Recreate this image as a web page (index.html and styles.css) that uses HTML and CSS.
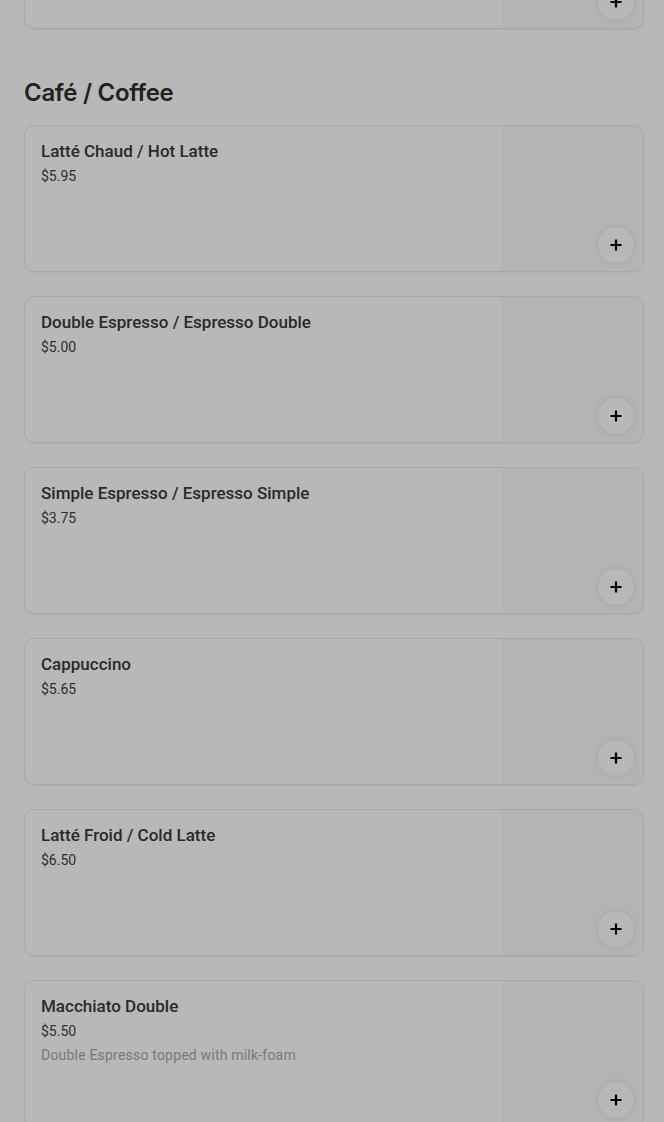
FILE: index.html
```html
<!DOCTYPE html>
<html lang="en">
<head>
    <meta charset="UTF-8">
    <meta name="viewport" content="width=device-width, initial-scale=1.0">
    <title>Menu - Café / Coffee</title>
    <link rel="stylesheet" href="styles.css">
</head>
<body>
    <div class="menu">
        <div class="item-card item-card-cut">
            <div class="item-info"></div>
            <div class="item-thumb"></div>
            <button class="add-btn" aria-label="Add">
                <svg viewBox="0 0 16 16" width="16" height="16"><path d="M8 2.5v11M2.5 8h11" stroke="#000" stroke-width="2.2" fill="none"/></svg>
            </button>
        </div>

        <h2 class="section-title">Café / Coffee</h2>

        <div class="item-list">
            <div class="item-card">
                <div class="item-info">
                    <div class="item-name">Latté Chaud / Hot Latte</div>
                    <div class="item-price">$5.95</div>
                </div>
                <div class="item-thumb"></div>
                <button class="add-btn" aria-label="Add">
                    <svg viewBox="0 0 16 16" width="16" height="16"><path d="M8 2.5v11M2.5 8h11" stroke="#000" stroke-width="2.2" fill="none"/></svg>
                </button>
            </div>
            <div class="item-card">
                <div class="item-info">
                    <div class="item-name">Double Espresso / Espresso Double</div>
                    <div class="item-price">$5.00</div>
                </div>
                <div class="item-thumb"></div>
                <button class="add-btn" aria-label="Add">
                    <svg viewBox="0 0 16 16" width="16" height="16"><path d="M8 2.5v11M2.5 8h11" stroke="#000" stroke-width="2.2" fill="none"/></svg>
                </button>
            </div>
            <div class="item-card">
                <div class="item-info">
                    <div class="item-name">Simple Espresso / Espresso Simple</div>
                    <div class="item-price">$3.75</div>
                </div>
                <div class="item-thumb"></div>
                <button class="add-btn" aria-label="Add">
                    <svg viewBox="0 0 16 16" width="16" height="16"><path d="M8 2.5v11M2.5 8h11" stroke="#000" stroke-width="2.2" fill="none"/></svg>
                </button>
            </div>
            <div class="item-card">
                <div class="item-info">
                    <div class="item-name">Cappuccino</div>
                    <div class="item-price">$5.65</div>
                </div>
                <div class="item-thumb"></div>
                <button class="add-btn" aria-label="Add">
                    <svg viewBox="0 0 16 16" width="16" height="16"><path d="M8 2.5v11M2.5 8h11" stroke="#000" stroke-width="2.2" fill="none"/></svg>
                </button>
            </div>
            <div class="item-card">
                <div class="item-info">
                    <div class="item-name">Latté Froid / Cold Latte</div>
                    <div class="item-price">$6.50</div>
                </div>
                <div class="item-thumb"></div>
                <button class="add-btn" aria-label="Add">
                    <svg viewBox="0 0 16 16" width="16" height="16"><path d="M8 2.5v11M2.5 8h11" stroke="#000" stroke-width="2.2" fill="none"/></svg>
                </button>
            </div>
            <div class="item-card">
                <div class="item-info">
                    <div class="item-name">Macchiato Double</div>
                    <div class="item-price">$5.50</div>
                    <div class="item-desc">Double Espresso topped with milk-foam</div>
                </div>
                <div class="item-thumb"></div>
                <button class="add-btn" aria-label="Add">
                    <svg viewBox="0 0 16 16" width="16" height="16"><path d="M8 2.5v11M2.5 8h11" stroke="#000" stroke-width="2.2" fill="none"/></svg>
                </button>
            </div>
        </div>
    </div>

    <div class="backdrop"></div>
</body>
</html>
```

FILE: styles.css
```css
body {
    margin: 0;
    font-family: Roboto, "Liberation Sans", sans-serif;
    background-color: #fff;
    color: #000;
    overflow: hidden;
}

.menu {
    padding: 0 20px 0 24px;
}

.item-card {
    position: relative;
    display: flex;
    height: 147px;
    box-sizing: border-box;
    border: 1px solid #e8e8e8;
    border-radius: 10px;
    box-shadow: 0 1px 2px rgba(0,0,0,0.05);
    overflow: hidden;
}

.item-card-cut {
    margin-top: -118px;
}

.item-info {
    flex: 1;
    padding: 14px 16px;
}

.item-thumb {
    width: 141px;
    background-color: #fafafa;
}

.item-name {
    font-size: 17px;
    font-weight: 500;
    line-height: 22px;
    color: #3a3a3a;
}

.item-price {
    margin-top: 4px;
    font-size: 14px;
    line-height: 20px;
    color: #3f3f3f;
}

.item-desc {
    margin-top: 4px;
    font-size: 14px;
    line-height: 20px;
    letter-spacing: 0.2px;
    color: #a8a8a8;
}

.section-title {
    margin: 48px 0 16px;
    font-family: Inter, "Liberation Sans", sans-serif;
    font-size: 24px;
    font-weight: 600;
    line-height: 32px;
    letter-spacing: -0.3px;
    color: #2e2e2e;
}

.item-list {
    display: flex;
    flex-direction: column;
    gap: 24px;
}

.add-btn {
    position: absolute;
    right: 9px;
    bottom: 8px;
    width: 36px;
    height: 36px;
    border: none;
    border-radius: 50%;
    background-color: #fff;
    box-shadow: 0 0 6px rgba(0,0,0,0.1);
    display: flex;
    align-items: center;
    justify-content: center;
    padding: 0;
    cursor: pointer;
}

.backdrop {
    position: fixed;
    inset: 0;
    background-color: rgba(0,0,0,0.28);
}
```
